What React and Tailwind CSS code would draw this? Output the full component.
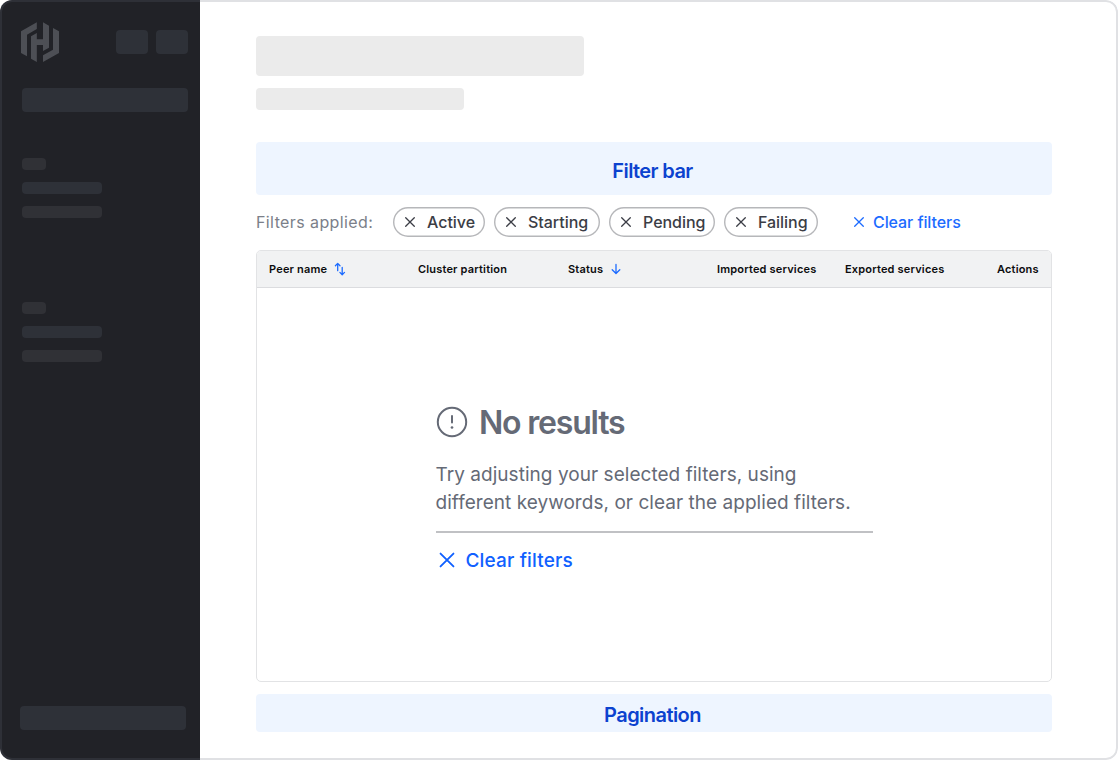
import React from "react";

function CloseIcon({ className }) {
  return (
    <svg viewBox="0 0 12 12" className={className} fill="none" stroke="currentColor" strokeLinecap="round">
      <path d="M1.7 1.7 10.3 10.3M10.3 1.7 1.7 10.3" />
    </svg>
  );
}

function Logo() {
  return (
    <svg viewBox="0 0 114 120" className="h-10 w-[38px] fill-[#4d4f55]">
      <path d="M47.5 1 0 28v65l18 10V38l29.500-17z" />
      <path d="M47.500 33 30 43v67l17.500 10V69H66v18l18-10V11.500L66 1v51H47.500z" />
      <path d="m96 18 18 10v65l-48 27v-20l30-17z" />
    </svg>
  );
}

function NavGroup({ className }) {
  return (
    <div className={"flex flex-col gap-3 " + className}>
      <div className="h-3 w-6 rounded bg-[#303136]" />
      <div className="h-3 w-20 rounded bg-[#2e3138]" />
      <div className="h-3 w-20 rounded bg-[#303136]" />
    </div>
  );
}

function Sidebar() {
  return (
    <aside className="flex w-[200px] shrink-0 flex-col bg-[#212227] pt-[22px] pb-[30px]">
      <div className="flex h-10 items-center pl-[21px]">
        <Logo />
        <div className="ml-[57px] h-6 w-8 rounded bg-[#2e3138]" />
        <div className="ml-2 h-6 w-8 rounded bg-[#2e3138]" />
      </div>
      <div className="mt-[26px] ml-[22px] h-6 w-[166px] rounded bg-[#2e3138]" />
      <NavGroup className="mt-[46px] ml-[22px]" />
      <NavGroup className="mt-[84px] ml-[22px]" />
      <div className="mt-auto ml-5 h-6 w-[166px] rounded bg-[#2e3138]" />
    </aside>
  );
}

function Tag({ label, className }) {
  return (
    <div className={"flex h-[30px] shrink-0 items-center rounded-full pl-[10.500px] text-[#3b3d45] shadow-[inset_0_0_0_1.400px_#b6b7ba] " + className}>
      <CloseIcon className="size-3 stroke-[1.300]" />
      <span className="ml-[11.500px] text-[16px] leading-5 font-[480] tracking-[-0.03px]">{label}</span>
    </div>
  );
}

function TableHead() {
  return (
    <div className="flex h-[37px] shrink-0 items-center border-b border-[#dbdcdf] bg-[#f1f2f3] pl-3 text-[11px] font-semibold tracking-[0.18px] text-[#0c0c0e]">
      <div className="flex w-[149px] items-center">
        Peer name
        <svg viewBox="0 0 12 14" className="mb-px ml-[7px] h-[14px] w-3" fill="none" stroke="#1c6bff" strokeWidth="1.300" strokeLinecap="round" strokeLinejoin="round">
          <path d="M3.700 8.700V1.500M1.400 3.700l2.300-2.300L6 3.700M8.200 5.300v7.300M5.900 10.400l2.300 2.300 2.300-2.300" />
        </svg>
      </div>
      <div className="w-[150px]">Cluster partition</div>
      <div className="flex w-[149px] items-center">
        Status
        <svg viewBox="0 0 10 12" className="mb-px ml-2 h-3 w-[10px]" fill="none" stroke="#1c6bff" strokeWidth="1.300" strokeLinecap="round" strokeLinejoin="round">
          <path d="M5 1.400v9M1.200 6.700 5 10.500l3.800-3.800" />
        </svg>
      </div>
      <div className="w-[128px]">Imported services</div>
      <div className="w-[152px]">Exported services</div>
      <div>Actions</div>
    </div>
  );
}

function EmptyState() {
  return (
    <div className="mt-[115px] ml-[178.500px] w-[437px] text-[#656a76]">
      <div className="flex h-10 items-center">
        <svg viewBox="0 0 32 32" className="mb-[2px] size-8" fill="none" stroke="currentColor" strokeWidth="2" strokeLinecap="round">
          <circle cx="16" cy="16" r="14.200" />
          <path d="M16 10v6.500" />
          <circle cx="16" cy="21.500" r="1.350" fill="currentColor" stroke="none" />
        </svg>
        <h2 className="ml-[11.500px] text-[32px] leading-10 font-semibold tracking-[-1.2px]">No results</h2>
      </div>
      <p className="mt-[18px] text-[19px] leading-7 tracking-[0.04px] whitespace-nowrap">
        Try adjusting your selected filters, using
        <br />
        different keywords, or clear the applied filters.
      </p>
      <div className="mt-[14px] h-[1.500px] bg-[#c0c1c4]" />
      <button className="mt-[14px] flex items-center text-[#1060ff]">
        <CloseIcon className="mb-px ml-[2px] size-[18px] stroke-[1.250]" />
        <span className="ml-[10px] text-[19px] leading-7 font-medium tracking-[0.15px]">Clear filters</span>
      </button>
    </div>
  );
}

export default function App() {
  return (
    <div className="relative flex h-[760px] w-[1118px] overflow-hidden rounded-xl bg-white font-[Inter,sans-serif]">
      <Sidebar />
      <main className="flex w-[852px] flex-col pt-9 pb-7 pl-14">
        <div className="h-10 w-[328px] rounded bg-[#ebebeb]" />
        <div className="mt-3 h-[22px] w-[208px] rounded bg-[#ebebeb]" />
        <div className="mt-8 flex h-[53px] items-center justify-center rounded bg-[#eef5ff] pt-[5px] pr-[3px] text-[20px] font-semibold tracking-[-0.6px] text-[#0c42cf]">
          Filter bar
        </div>
        <div className="mt-3 flex h-[30px] items-center">
          <span className="w-[137px] shrink-0 text-[16px] tracking-[0.4px] text-[#7b7f89]">Filters applied:</span>
          <div className="flex gap-[9px]">
            <Tag label="Active" className="w-[92px]" />
            <Tag label="Starting" className="w-[106px]" />
            <Tag label="Pending" className="w-[106px]" />
            <Tag label="Failing" className="w-[94px]" />
          </div>
          <button className="ml-[35px] flex items-center text-[#1c6bff]">
            <CloseIcon className="size-3 stroke-[1.300]" />
            <span className="ml-2 text-[16px] leading-5 font-medium tracking-[-0.08px] whitespace-nowrap">Clear filters</span>
          </button>
        </div>
        <section className="mt-[13px] flex h-[432px] flex-col overflow-hidden rounded-[5px] border border-[#e2e3e5]">
          <TableHead />
          <EmptyState />
        </section>
        <div className="mt-3 flex h-[38px] items-center justify-center rounded bg-[#eef5ff] pt-[3px] pr-[3px] text-[20px] font-semibold tracking-[-0.55px] text-[#0c42cf]">
          Pagination
        </div>
      </main>
      <div className="pointer-events-none absolute inset-0 rounded-xl border-2 border-[#656a76]/20" />
    </div>
  );
}
